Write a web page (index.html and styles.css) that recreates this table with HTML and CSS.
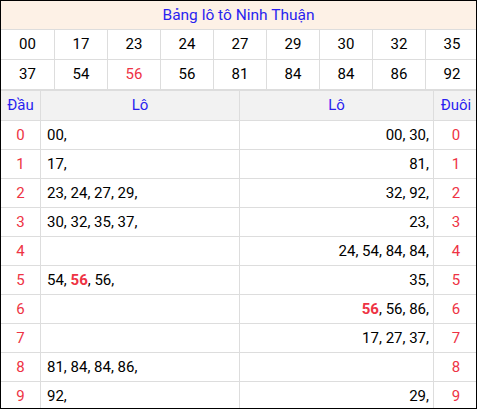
FILE: index.html
```
<!DOCTYPE html>
<html lang="vi">
<head>
<meta charset="utf-8">
<title>Bảng lô tô Ninh Thuận</title>
<link rel="stylesheet" href="styles.css">
</head>
<body>
<div class="page">
  <div class="title">Bảng lô tô Ninh Thuận</div>
  <div class="nums">
    <div>00</div><div>17</div><div>23</div><div>24</div><div>27</div><div>29</div><div>30</div><div>32</div><div>35</div>
    <div>37</div><div>54</div><div class="red">56</div><div>56</div><div>81</div><div>84</div><div>84</div><div>86</div><div>92</div>
  </div>
  <div class="lo">
    <div class="hd">Đầu</div><div class="hd">Lô</div><div class="hd">Lô</div><div class="hd">Đuôi</div>

    <div class="d">0</div><div class="l">00,</div><div class="r">00, 30,</div><div class="d">0</div>
    <div class="d">1</div><div class="l">17,</div><div class="r">81,</div><div class="d">1</div>
    <div class="d">2</div><div class="l">23, 24, 27, 29,</div><div class="r">32, 92,</div><div class="d">2</div>
    <div class="d">3</div><div class="l">30, 32, 35, 37,</div><div class="r">23,</div><div class="d">3</div>
    <div class="d">4</div><div class="l"></div><div class="r">24, 54, 84, 84,</div><div class="d">4</div>
    <div class="d">5</div><div class="l">54, <b class="hot">56</b>, 56,</div><div class="r">35,</div><div class="d">5</div>
    <div class="d">6</div><div class="l"></div><div class="r"><b class="hot">56</b>, 56, 86,</div><div class="d">6</div>
    <div class="d">7</div><div class="l"></div><div class="r">17, 27, 37,</div><div class="d">7</div>
    <div class="d">8</div><div class="l">81, 84, 84, 86,</div><div class="r"></div><div class="d">8</div>
    <div class="d">9</div><div class="l">92,</div><div class="r">29,</div><div class="d">9</div>
  </div>
</div>
</body>
</html>
```
FILE: styles.css
```
html, body {
  margin: 0;
  padding: 0;
  background: #fff;
}

.page {
  width: 477px;
  height: 409px;
  box-sizing: border-box;
  border: 1px solid #000;
  overflow: hidden;
  font-family: Roboto, "Liberation Sans", sans-serif;
  font-size: 15px;
  color: #000;
}

.title {
  height: 28px;
  line-height: 28px;
  background: #fdf1e6;
  color: #2a1ff0;
  text-align: center;
  font-size: 15.5px;
  border-bottom: 1px solid #ddd;
}

.nums {
  display: grid;
  grid-template-columns: 53px repeat(8, 52px);
  grid-auto-rows: 29px;
  gap: 1px;
  background: #ddd;
  border-bottom: 1px solid #ddd;
}

.nums > div {
  background: #fff;
  line-height: 29px;
  text-align: center;
}

.nums .red {
  color: #ee3344;
}

.lo {
  display: grid;
  grid-template-columns: 39px 198px 193px 44px;
  grid-template-rows: 29px;
  grid-auto-rows: 28px;
  gap: 1px;
  background: #ddd;
  border-top: 1px solid #ddd;
}

.lo > div {
  background: #fff;
  line-height: 28px;
  white-space: nowrap;
}

.lo .hd {
  background: #f2f2f2;
  color: #2a1ff0;
  text-align: center;
  line-height: 29px;
}

.lo .d {
  color: #ee3344;
  text-align: center;
}

.lo .l {
  padding-left: 6px;
}

.lo .r {
  text-align: right;
  padding-right: 4px;
}

.hot {
  color: #ee3344;
  font-weight: bold;
}
```
